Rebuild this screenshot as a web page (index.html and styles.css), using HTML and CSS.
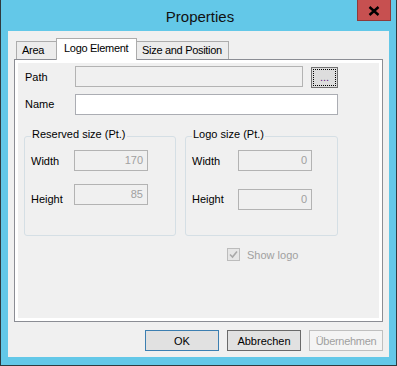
FILE: index.html
```html
<!DOCTYPE html>
<html>
<head>
    <title>Properties</title>
    <meta name="viewport" content="width=device-width, initial-scale=1">
    <link rel="stylesheet" href="styles.css">
</head>

<body>
    <div class="window">
        <div class="titlebar">
            <span class="title">Properties</span>
            <button class="close-btn">
                <svg width="12" height="10" viewBox="0 0 12 10">
                    <path d="M1.5 1 L10.5 9 M10.5 1 L1.5 9" stroke="#000" stroke-width="2.4" fill="none"/>
                </svg>
            </button>
        </div>

        <div class="client">
            <div class="tabs">
                <div class="tab tab-area">Area</div>
                <div class="tab active">Logo Element</div>
                <div class="tab tab-size">Size and Position</div>
            </div>

            <div class="tab-panel">
                <div class="tab-page">
                    <div class="row path-row">
                        <label class="row-label">Path</label>
                        <div class="textbox disabled path-box"></div>
                        <button class="browse-btn"><span class="focus-rect">...</span></button>
                    </div>
                    <div class="row name-row">
                        <label class="row-label">Name</label>
                        <div class="textbox name-box"></div>
                    </div>

                    <div class="groups">
                        <div class="group group-reserved">
                            <span class="legend">Reserved size (Pt.)</span>
                            <div class="field first">
                                <span class="field-label">Width</span>
                                <div class="textbox disabled num">170</div>
                            </div>
                            <div class="field second">
                                <span class="field-label low">Height</span>
                                <div class="textbox disabled num">85</div>
                            </div>
                        </div>
                        <div class="group group-logo">
                            <span class="legend">Logo size (Pt.)</span>
                            <div class="field first">
                                <span class="field-label">Width</span>
                                <div class="textbox disabled num">0</div>
                            </div>
                            <div class="field second">
                                <span class="field-label">Height</span>
                                <div class="textbox disabled num">0</div>
                            </div>
                        </div>
                    </div>

                    <div class="check-row">
                        <span class="checkbox">
                            <svg width="11" height="11" viewBox="0 0 11 11">
                                <path d="M2 5.5 L4.5 8 L9 2.5" stroke="#a8a8a8" stroke-width="1.6" fill="none"/>
                            </svg>
                        </span>
                        <span class="check-label">Show logo</span>
                    </div>
                </div>
            </div>

            <div class="buttons">
                <button class="btn btn-default">OK</button>
                <button class="btn btn-focus">Abbrechen</button>
                <button class="btn" disabled>Übernehmen</button>
            </div>
        </div>
    </div>
</body>
</html>
```

FILE: styles.css
```css
body {
    margin: 0;
    padding: 0;
    font-family: "Liberation Sans", Arial, sans-serif;
    font-size: 11px;
    color: #000;
}

button {
    font-family: inherit;
    font-size: 11px;
    padding: 0;
    margin: 0;
}

.window {
    position: relative;
    width: 397px;
    height: 366px;
    box-sizing: border-box;
    background-color: #63c8e8;
    border: 1px solid #2f3a3e;
    border-top: none;
    padding: 0 7px 8px 7px;
}

.titlebar {
    height: 31px;
    display: flex;
    align-items: center;
    justify-content: center;
}

.title {
    font-size: 15px;
    color: #111;
    padding-left: 3px;
    padding-top: 1px;
}

.close-btn {
    position: absolute;
    top: 0;
    right: 5px;
    width: 34px;
    height: 21px;
    box-sizing: border-box;
    background-color: #c75050;
    border: 1px solid #8e3a3a;
    border-top: none;
    display: flex;
    align-items: center;
    justify-content: center;
    padding-top: 1px;
}

.client {
    height: 326px;
    background-color: #f0f0f0;
    display: flex;
    flex-direction: column;
}

/* tabs */
.tabs {
    display: flex;
    align-items: flex-end;
    height: 21px;
    margin-top: 7px;
    padding-left: 8px;
    letter-spacing: -0.3px;
}

.tab {
    box-sizing: border-box;
    height: 18px;
    line-height: 17px;
    border: 1px solid #acacac;
    border-bottom: none;
    background-color: #ececec;
    padding-left: 5px;
    white-space: nowrap;
}

.tab-area {
    width: 41px;
}

.tab.active {
    position: relative;
    z-index: 1;
    width: 81px;
    height: 22px;
    line-height: 19px;
    margin-left: -1px;
    margin-bottom: -1px;
    padding-left: 7px;
    background-color: #fff;
}

.tab-size {
    width: 93px;
    margin-left: -1px;
}

.tab-panel {
    margin: 0 6px;
    height: 263px;
    box-sizing: border-box;
    border: 1px solid #8b8d94;
    background-color: #fff;
    padding: 3px;
}

.tab-page {
    height: 100%;
    background-color: #f0f0f0;
    overflow: hidden;
}

/* rows */
.row {
    display: flex;
    align-items: flex-start;
}

.path-row {
    margin-top: 3px;
}

.name-row {
    margin-top: 6px;
}

.row-label {
    box-sizing: border-box;
    width: 57px;
    padding-left: 7px;
    height: 21px;
    line-height: 21px;
}

.path-row .row-label {
    line-height: 23px;
}

.textbox {
    box-sizing: border-box;
    height: 21px;
    border: 1px solid #abadb3;
    background-color: #fff;
}

.textbox.disabled {
    border-color: #b3b3b3;
    background-color: #f0f0f0;
    color: #a0a0a0;
}

.path-box {
    width: 228px;
}

.name-box {
    width: 263px;
}

.browse-btn {
    box-sizing: border-box;
    width: 27px;
    height: 21px;
    margin-left: 8px;
    margin-top: 1px;
    border: 1px solid #707070;
    background-color: #dddddd;
    padding: 1px;
    display: flex;
}

.focus-rect {
    flex: 1;
    border: 1px dotted #000;
    line-height: 15px;
    text-align: center;
    color: #602080;
}

/* group boxes */
.groups {
    display: flex;
    gap: 9px;
    margin-top: 21px;
    margin-left: 6px;
}

.group {
    box-sizing: border-box;
    height: 100px;
    border: 1px solid #d5dfe5;
    border-radius: 3px;
}

.group-reserved {
    width: 152px;
}

.group-logo {
    width: 153px;
}

.legend {
    display: block;
    width: fit-content;
    margin: -9px 0 0 6px;
    padding: 0 1px;
    line-height: 13px;
    background-color: #f0f0f0;
}

.field {
    display: flex;
    align-items: center;
    height: 21px;
    padding-left: 6px;
}

.field.first {
    margin-top: 9px;
}

.group-reserved .field.second {
    margin-top: 13px;
}

.group-logo .field.second {
    margin-top: 18px;
}

.field-label {
    width: 43px;
}

.group-logo .field-label {
    width: 46px;
}

.group-logo .field.second .field-label {
    margin-top: -2px;
}

.field-label.low {
    margin-top: 9px;
}

.num {
    width: 74px;
    text-align: right;
    padding-right: 4px;
    line-height: 19px;
}

/* checkbox */
.check-row {
    display: flex;
    align-items: center;
    margin-top: 12px;
    margin-left: 209px;
}

.checkbox {
    box-sizing: border-box;
    width: 13px;
    height: 13px;
    border: 1px solid #bcbcbc;
    background-color: #e6e6e6;
    display: flex;
}

.check-label {
    margin-left: 7px;
    color: #a0a0a0;
}

/* dialog buttons */
.buttons {
    display: flex;
    justify-content: flex-end;
    gap: 8px;
    margin-top: 8px;
    padding-right: 6px;
}

.btn {
    box-sizing: border-box;
    width: 74px;
    height: 21px;
    border: 1px solid #adadad;
    background-color: #e1e1e1;
    color: #000;
}

.btn-default {
    border-color: #3c7fb1;
}

.btn-focus {
    border-color: #6a6a6a;
}

.btn:disabled {
    border-color: #bfbfbf;
    background-color: #f4f4f4;
    color: #a0a0a0;
    letter-spacing: -0.3px;
}
```
